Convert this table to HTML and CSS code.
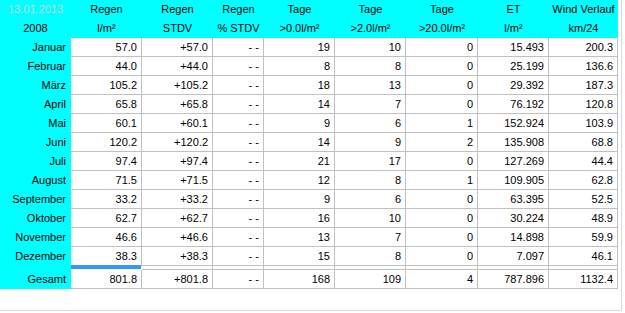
FILE: index.html
```html
<!DOCTYPE html>
<html>
<head>
<meta charset="utf-8">
<link rel="stylesheet" href="styles.css">
</head>
<body>
<div class="frame">
<div class="grid">
  <div class="h date">13.01.2013</div><div class="h">Regen</div><div class="h">Regen</div><div class="h">Regen</div><div class="h">Tage</div><div class="h">Tage</div><div class="h">Tage</div><div class="h">ET</div><div class="h">Wind Verlauf</div>
  <div class="h">2008</div><div class="h">l/m²</div><div class="h">STDV</div><div class="h">% STDV</div><div class="h">&gt;0.0l/m²</div><div class="h">&gt;2.0l/m²</div><div class="h">&gt;20.0l/m²</div><div class="h">l/m²</div><div class="h">km/24</div>

  <div class="lab">Januar</div><div class="c">57.0</div><div class="c">+57.0</div><div class="c">- -</div><div class="c">19</div><div class="c">10</div><div class="c">0</div><div class="c">15.493</div><div class="c">200.3</div>
  <div class="lab">Februar</div><div class="c">44.0</div><div class="c">+44.0</div><div class="c">- -</div><div class="c">8</div><div class="c">8</div><div class="c">0</div><div class="c">25.199</div><div class="c">136.6</div>
  <div class="lab">März</div><div class="c">105.2</div><div class="c">+105.2</div><div class="c">- -</div><div class="c">18</div><div class="c">13</div><div class="c">0</div><div class="c">29.392</div><div class="c">187.3</div>
  <div class="lab">April</div><div class="c">65.8</div><div class="c">+65.8</div><div class="c">- -</div><div class="c">14</div><div class="c">7</div><div class="c">0</div><div class="c">76.192</div><div class="c">120.8</div>
  <div class="lab">Mai</div><div class="c">60.1</div><div class="c">+60.1</div><div class="c">- -</div><div class="c">9</div><div class="c">6</div><div class="c">1</div><div class="c">152.924</div><div class="c">103.9</div>
  <div class="lab">Juni</div><div class="c">120.2</div><div class="c">+120.2</div><div class="c">- -</div><div class="c">14</div><div class="c">9</div><div class="c">2</div><div class="c">135.908</div><div class="c">68.8</div>
  <div class="lab">Juli</div><div class="c">97.4</div><div class="c">+97.4</div><div class="c">- -</div><div class="c">21</div><div class="c">17</div><div class="c">0</div><div class="c">127.269</div><div class="c">44.4</div>
  <div class="lab">August</div><div class="c">71.5</div><div class="c">+71.5</div><div class="c">- -</div><div class="c">12</div><div class="c">8</div><div class="c">1</div><div class="c">109.905</div><div class="c">62.8</div>
  <div class="lab">September</div><div class="c">33.2</div><div class="c">+33.2</div><div class="c">- -</div><div class="c">9</div><div class="c">6</div><div class="c">0</div><div class="c">63.395</div><div class="c">52.5</div>
  <div class="lab">Oktober</div><div class="c">62.7</div><div class="c">+62.7</div><div class="c">- -</div><div class="c">16</div><div class="c">10</div><div class="c">0</div><div class="c">30.224</div><div class="c">48.9</div>
  <div class="lab">November</div><div class="c">46.6</div><div class="c">+46.6</div><div class="c">- -</div><div class="c">13</div><div class="c">7</div><div class="c">0</div><div class="c">14.898</div><div class="c">59.9</div>
  <div class="lab">Dezember</div><div class="c">38.3</div><div class="c">+38.3</div><div class="c">- -</div><div class="c">15</div><div class="c">8</div><div class="c">0</div><div class="c">7.097</div><div class="c">46.1</div>

  <div class="lab"></div><div class="sep sel"></div><div class="sep"></div><div class="sep"></div><div class="sep"></div><div class="sep"></div><div class="sep"></div><div class="sep"></div><div class="sep"></div>

  <div class="lab">Gesamt</div><div class="c">801.8</div><div class="c">+801.8</div><div class="c">- -</div><div class="c">168</div><div class="c">109</div><div class="c">4</div><div class="c">787.896</div><div class="c">1132.4</div>
</div>
</div>
</body>
</html>
```

FILE: styles.css
```css
html, body {
  margin: 0;
  padding: 0;
  background: #ffffff;
}
body {
  font-family: "Liberation Sans", Arial, sans-serif;
  font-size: 11px;
  color: #000000;
}
.frame {
  width: 621px;
  height: 310px;
  border-right: 1px solid #d8d8d8;
  border-bottom: 1px solid #d8d8d8;
  background: #ffffff;
}
.grid {
  display: grid;
  grid-template-columns: 71px 71px 71px 51px 71px 71px 72px 71px 69px;
  grid-template-rows: repeat(14, 19px) 4px 19px;
  width: 618px;
}
.h {
  background: #00ffff;
  text-align: center;
  line-height: 19px;
  white-space: nowrap;
}
.date {
  color: #c4d4d4;
}
.lab {
  background: #00ffff;
  text-align: right;
  padding-right: 5px;
  line-height: 19px;
  white-space: nowrap;
}
.c {
  box-sizing: border-box;
  border-right: 1px solid #c0c0c0;
  border-bottom: 1px solid #c0c0c0;
  text-align: right;
  padding-right: 4px;
  line-height: 18px;
  white-space: nowrap;
}
.sep {
  box-sizing: border-box;
  border-right: 1px solid #c0c0c0;
  border-bottom: 1px solid #c0c0c0;
}
.sel {
  background: #3399ff;
  box-shadow: 0 -1px 0 #3399ff;
  margin-right: 1px;
  margin-bottom: 1px;
  border-right: 0;
  border-bottom: 0;
}
```
